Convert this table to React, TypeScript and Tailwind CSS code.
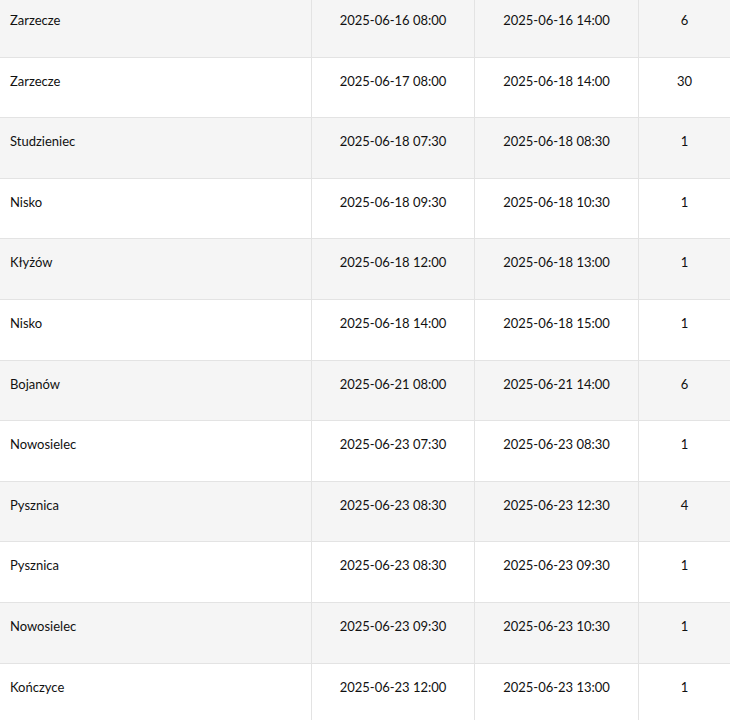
const rows = [
  ['Zarzecze', '2025-06-16 08:00', '2025-06-16 14:00', '6'],
  ['Zarzecze', '2025-06-17 08:00', '2025-06-18 14:00', '30'],
  ['Studzieniec', '2025-06-18 07:30', '2025-06-18 08:30', '1'],
  ['Nisko', '2025-06-18 09:30', '2025-06-18 10:30', '1'],
  ['Kłyżów', '2025-06-18 12:00', '2025-06-18 13:00', '1'],
  ['Nisko', '2025-06-18 14:00', '2025-06-18 15:00', '1'],
  ['Bojanów', '2025-06-21 08:00', '2025-06-21 14:00', '6'],
  ['Nowosielec', '2025-06-23 07:30', '2025-06-23 08:30', '1'],
  ['Pysznica', '2025-06-23 08:30', '2025-06-23 12:30', '4'],
  ['Pysznica', '2025-06-23 08:30', '2025-06-23 09:30', '1'],
  ['Nowosielec', '2025-06-23 09:30', '2025-06-23 10:30', '1'],
  ['Kończyce', '2025-06-23 12:00', '2025-06-23 13:00', '1'],
];

export default function App() {
  return (
    <div className="w-[730px] h-[720px] overflow-hidden bg-white text-[13px] leading-5 text-[#111] font-['Lato',sans-serif]">
      {/* scrolled table body, first row partly cut off */}
      <div className="-mt-[3px] flex flex-col">
        {rows.map((r, i) => (
          <div
            key={i}
            className={`grid grid-cols-[312px_163px_164px_1fr] h-[60.6px] border-b border-[#e3e3e3] ${
              i % 2 === 0 ? 'bg-[#f5f5f5]' : 'bg-white'
            }`}
          >
            <div className="pl-[10px] pt-[13px] border-r border-[#e3e3e3]">{r[0]}</div>
            <div className="pt-[13px] text-center border-r border-[#e3e3e3]">{r[1]}</div>
            <div className="pt-[13px] text-center border-r border-[#e3e3e3]">{r[2]}</div>
            <div className="pt-[13px] text-center">{r[3]}</div>
          </div>
        ))}
      </div>
    </div>
  );
}
